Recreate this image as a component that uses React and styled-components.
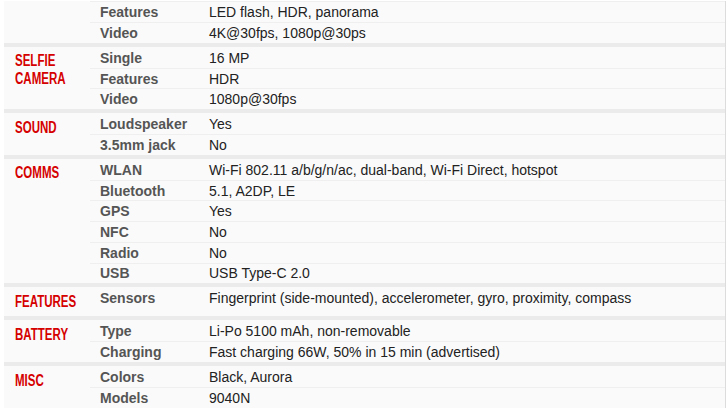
import React from "react";
import styled, { createGlobalStyle } from "styled-components";

const Global = createGlobalStyle`
  html, body { margin: 0; padding: 0; background: #ffffff; }
  body { font-family: "Liberation Sans", Arial, sans-serif; overflow: hidden; }
`;

const Page = styled.div`
  padding: 1.4px 0 0 4px;
`;

const Table = styled.div`
  width: 721px;
  background: #fafafa;
  border-right: 1px solid #dcdcdc;
`;

const Section = styled.section`
  display: flex;
  padding-top: ${(p) => (p.$first ? "0" : "1.3px")};
  border-top: ${(p) => (p.$first ? "none" : "4px solid #ebebeb")};
`;

const Category = styled.div`
  flex: 0 0 86px;
  width: 86px;
  min-width: 0;
  box-sizing: border-box;
  min-height: 27.8px;
  padding: 4.3px 0 0 11px;
`;

const CatTitle = styled.h2`
  margin: 0;
  width: 0;
  color: #d50000;
  font-family: "Liberation Sans", Arial, sans-serif;
  font-weight: bold;
  font-size: 16px;
  line-height: 17.95px;
  text-transform: uppercase;
  white-space: nowrap;
  transform: scaleX(0.72);
  transform-origin: left top;
`;

const Rows = styled.div`
  flex: 1;
  min-width: 0;
  display: flex;
  flex-direction: column;
`;

const Row = styled.div`
  display: grid;
  grid-template-columns: 110px 1fr;
  height: 19.7px;
  align-items: center;
  font-size: 14px;
  line-height: 16px;
  border-top: 1px solid #efefef;
  &:first-child {
    border-top: ${(p) => (p.$cut ? "1px solid #efefef" : "none")};
  }
`;

const Label = styled.div`
  padding-left: 10px;
  color: #555555;
  font-weight: bold;
  white-space: nowrap;
`;

const Value = styled.div`
  padding-left: 9px;
  color: #222222;
  white-space: nowrap;
`;

const sections = [
  {
    title: [],
    cut: true,
    rows: [
      ["Features", "LED flash, HDR, panorama"],
      ["Video", "4K@30fps, 1080p@30ps"],
    ],
  },
  {
    title: ["Selfie", "camera"],
    rows: [
      ["Single", "16 MP"],
      ["Features", "HDR"],
      ["Video", "1080p@30fps"],
    ],
  },
  {
    title: ["Sound"],
    rows: [
      ["Loudspeaker", "Yes"],
      ["3.5mm jack", "No"],
    ],
  },
  {
    title: ["Comms"],
    rows: [
      ["WLAN", "Wi-Fi 802.11 a/b/g/n/ac, dual-band, Wi-Fi Direct, hotspot"],
      ["Bluetooth", "5.1, A2DP, LE"],
      ["GPS", "Yes"],
      ["NFC", "No"],
      ["Radio", "No"],
      ["USB", "USB Type-C 2.0"],
    ],
  },
  {
    title: ["Features"],
    rows: [
      [
        "Sensors",
        "Fingerprint (side-mounted), accelerometer, gyro, proximity, compass",
      ],
    ],
  },
  {
    title: ["Battery"],
    rows: [
      ["Type", "Li-Po 5100 mAh, non-removable"],
      ["Charging", "Fast charging 66W, 50% in 15 min (advertised)"],
    ],
  },
  {
    title: ["Misc"],
    rows: [
      ["Colors", "Black, Aurora"],
      ["Models", "9040N"],
    ],
  },
];

export default function App() {
  return (
    <>
      <Global />
      <Page>
        <Table>
          {sections.map((s, i) => (
            <Section key={i} $first={i === 0}>
              <Category>
                {s.title.length > 0 && (
                  <CatTitle>
                    {s.title.map((t, k) => (
                      <React.Fragment key={t}>
                        {k > 0 && <br />}
                        {t}
                      </React.Fragment>
                    ))}
                  </CatTitle>
                )}
              </Category>
              <Rows>
                {s.rows.map(([l, v], j) => (
                  <Row key={j} $cut={s.cut}>
                    <Label>{l}</Label>
                    <Value>{v}</Value>
                  </Row>
                ))}
              </Rows>
            </Section>
          ))}
        </Table>
      </Page>
    </>
  );
}
